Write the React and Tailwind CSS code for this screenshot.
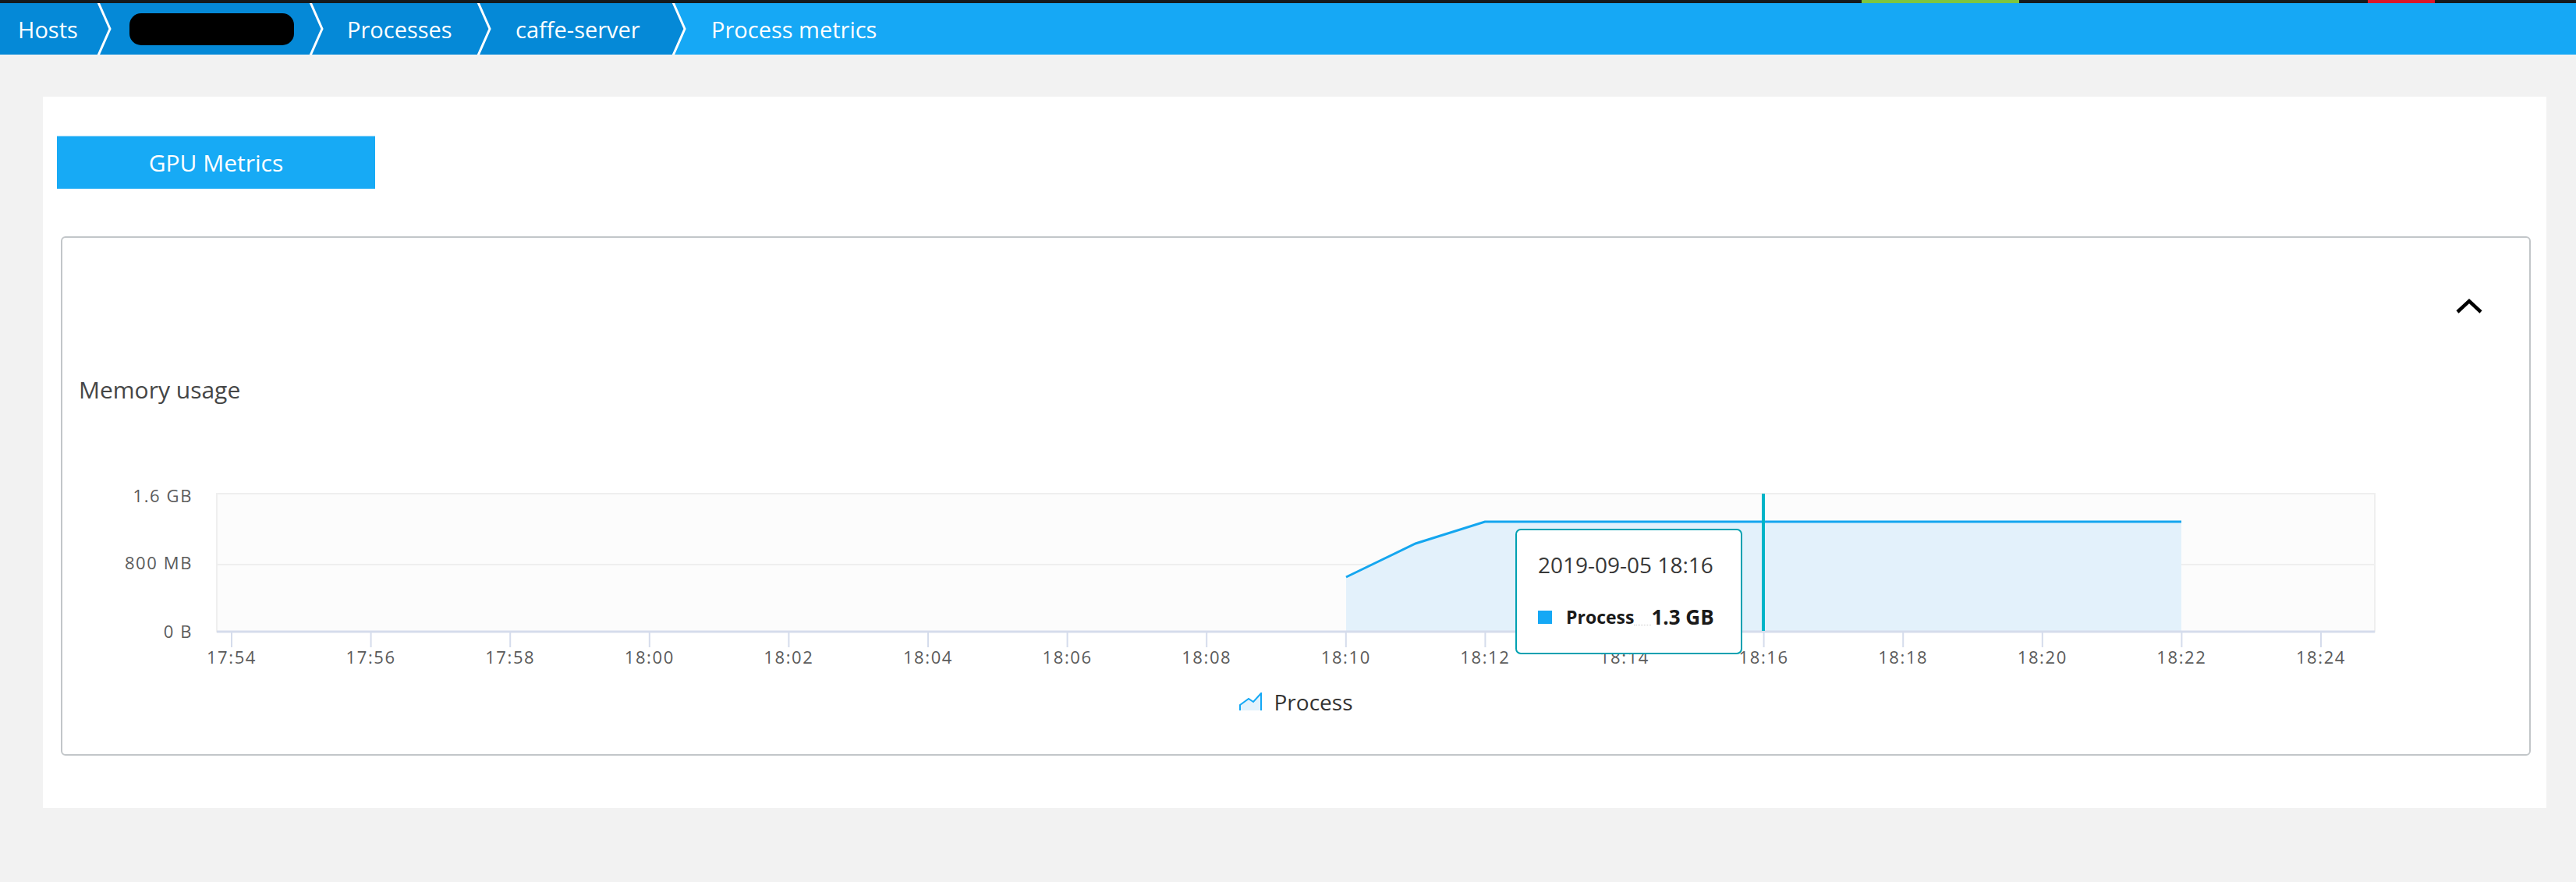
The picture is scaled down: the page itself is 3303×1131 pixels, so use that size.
import React from "react";

function Sep({ from, bgClass }) {
  return (
    <svg width="20" height="66" viewBox="0 0 20 66" className={`shrink-0 block ${bgClass}`}>
      <polygon points="0,0 2,0 17,33 2,66 0,66" fill={from} />
      <polyline points="2,-1 17,33 2,67" fill="none" stroke="#ffffff" strokeWidth="3" />
    </svg>
  );
}

const ticks = ["17:54","17:56","17:58","18:00","18:02","18:04","18:06","18:08","18:10","18:12","18:14","18:16","18:18","18:20","18:22","18:24"];

function Chart() {
  const x0 = 217;
  const step = 178.6;
  return (
    <div className="relative h-[280px]">
      <svg width="3163" height="280" viewBox="0 0 3163 280" className="block">
        <rect x="198" y="33" width="2767" height="177" fill="#fcfcfc" stroke="#efefef" strokeWidth="2" />
        <line x1="198" y1="124" x2="2965" y2="124" stroke="#efefef" strokeWidth="2" />
        <polygon points="1646,140 1735,97 1824,69 2717,69 2717,209 1646,209" fill="#e3f1fb" />
        <polyline points="1646,140 1735,97 1824,69 2717,69" fill="none" stroke="#14a6ef" strokeWidth="3" />
        <line x1="198" y1="210" x2="2965" y2="210" stroke="#d5dcec" strokeWidth="3" />
        {ticks.map((t, i) => (
          <g key={t}>
            <line x1={x0 + i * step} y1="210" x2={x0 + i * step} y2="230" stroke="#d5dcec" strokeWidth="2" />
            <text x={x0 + i * step} y="251" textAnchor="middle" fontSize="22" letterSpacing="1.6" fill="#5b5b5b">{t}</text>
          </g>
        ))}
        <text x="167" y="44" textAnchor="end" fontSize="22" letterSpacing="1.6" fill="#5b5b5b">1.6 GB</text>
        <text x="167" y="130" textAnchor="end" fontSize="22" letterSpacing="1.6" fill="#5b5b5b">800 MB</text>
        <text x="167" y="218" textAnchor="end" fontSize="22" letterSpacing="1.6" fill="#5b5b5b">0 B</text>
        <line x1="2181" y1="33" x2="2181" y2="209" stroke="#00b4c8" strokeWidth="4" />
      </svg>
      <div className="absolute left-[1863px] top-[78px] w-[291px] h-[161px] bg-white border-2 border-[#00a1b1] rounded-[7px] pl-[27px] pt-[30px]">
        <div className="text-[28px] leading-[28px] text-[#383838]">2019-09-05 18:16</div>
        <div className="flex items-center h-[26px] mt-[40px]">
          <div className="w-[18px] h-[17px] bg-[#15a8f5]" />
          <div className="ml-[18px] text-[23px] leading-[26px] font-bold text-[#1a1a1a]">Process</div>
          <div className="w-[22px] self-end mb-[2px] border-b border-dotted border-[#c8c8c8]" />
          <div className="text-[26px] leading-[26px] font-bold text-[#1a1a1a]">1.3 GB</div>
        </div>
      </div>
    </div>
  );
}

export default function App() {
  return (
    <div className="min-h-[1131px] bg-[#f2f2f2] font-['Open_Sans',sans-serif]">
      <div className="flex h-[4px] bg-[#151a1d]">
        <div className="w-[2387px]" />
        <div className="w-[202px] bg-[#7dc540]" />
        <div className="w-[447px]" />
        <div className="w-[86px] bg-[#dc172a]" />
        <div className="flex-1" />
      </div>
      <nav className="flex h-[66px] text-white text-[29px] leading-none">
        <div className="w-[124px] bg-[#0589d7] flex items-center pl-[23px]">Hosts</div>
        <Sep from="#0589d7" bgClass="bg-[#0589d7]" />
        <div className="w-[252px] bg-[#0589d7] flex items-center pl-[22px]">
          <div className="w-[211px] h-[41px] bg-black rounded-[15px]" />
        </div>
        <Sep from="#0589d7" bgClass="bg-[#0589d7]" />
        <div className="w-[195px] bg-[#0589d7] flex items-center pl-[29px]">Processes</div>
        <Sep from="#0589d7" bgClass="bg-[#0589d7]" />
        <div className="w-[230px] bg-[#0589d7] flex items-center pl-[30px]">caffe-server</div>
        <Sep from="#0589d7" bgClass="bg-[#16a8f5]" />
        <div className="flex-1 bg-[#16a8f5] flex items-center pl-[31px]">Process metrics</div>
      </nav>
      <div className="pl-[55px] pr-[38px] pt-[54px] pb-[95px]">
        <div className="bg-white pt-[50px] pl-[18px] pr-[20px] pb-[67px]">
          <button className="w-[408px] h-[68px] bg-[#17aaf5] border-t border-[#9fd9f9] text-white text-[30px] leading-none flex items-center justify-center">
            GPU Metrics
          </button>
          <div className="mt-[61px] ml-[5px] border-2 border-[#c2c6c9] rounded-[6px]">
            <div className="flex justify-end h-[23px] mt-[76px] pr-[59px]">
              <svg width="36" height="23" viewBox="0 0 36 23">
                <polyline points="3,19 18,5 33,19" fill="none" stroke="#000" strokeWidth="4.5" />
              </svg>
            </div>
            <div className="mt-[81px] pl-[21px] text-[30px] leading-[29px] text-[#454646]">Memory usage</div>
            <div className="mt-[86px]">
              <Chart />
            </div>
            <div className="mt-[4px] h-[32px] flex items-center justify-center gap-[15px]">
              <svg width="30" height="24" viewBox="0 0 30 24">
                <polygon points="1,23 1,16 12,8 18,12 28,1 28,23" fill="#e3f2fc" />
                <polyline points="1,23 1,16 12,8 18,12 28,1 28,23" fill="none" stroke="#14a8f5" strokeWidth="2" />
              </svg>
              <span className="text-[28px] leading-[28px] text-[#333]">Process</span>
            </div>
            <div className="h-[51px]" />
          </div>
        </div>
      </div>
    </div>
  );
}
